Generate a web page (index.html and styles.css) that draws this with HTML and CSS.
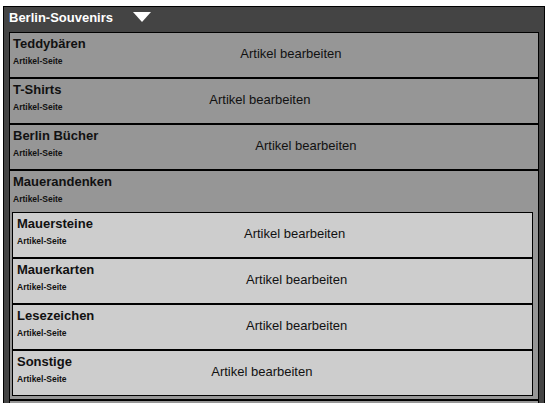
FILE: index.html
```html
<!DOCTYPE html>
<html lang="de">
<head>
  <meta charset="UTF-8">
  <meta name="viewport" content="width=device-width, initial-scale=1.0">
  <title>Berlin-Souvenirs</title>
  <link rel="stylesheet" href="styles.css">
</head>
<body>
  <div class="panel">
    <div class="panel-head">
      <span class="panel-title">Berlin-Souvenirs</span>
      <svg class="toggle" width="18" height="10" viewBox="0 0 18 10"><polygon points="0,0 18,0 9,10" fill="#fff"/></svg>
    </div>
    <div class="cat-list">
      <div class="cat">
        <table class="row"><tr>
          <td class="name"><div class="title">Teddybären</div><div class="sub">Artikel-Seite</div></td>
          <td class="action">Artikel bearbeiten</td>
        </tr></table>
      </div>
      <div class="cat">
        <table class="row"><tr>
          <td class="name"><div class="title">T-Shirts</div><div class="sub">Artikel-Seite</div></td>
          <td class="action">Artikel bearbeiten</td>
        </tr></table>
      </div>
      <div class="cat">
        <table class="row"><tr>
          <td class="name"><div class="title">Berlin Bücher</div><div class="sub">Artikel-Seite</div></td>
          <td class="action">Artikel bearbeiten</td>
        </tr></table>
      </div>
      <div class="cat group">
        <div class="group-name"><div class="title">Mauerandenken</div><div class="sub">Artikel-Seite</div></div>
        <div class="child-list">
          <div class="cat child">
            <table class="row"><tr>
              <td class="name"><div class="title">Mauersteine</div><div class="sub">Artikel-Seite</div></td>
              <td class="action">Artikel bearbeiten</td>
            </tr></table>
          </div>
          <div class="cat child">
            <table class="row"><tr>
              <td class="name"><div class="title">Mauerkarten</div><div class="sub">Artikel-Seite</div></td>
              <td class="action">Artikel bearbeiten</td>
            </tr></table>
          </div>
          <div class="cat child">
            <table class="row"><tr>
              <td class="name"><div class="title">Lesezeichen</div><div class="sub">Artikel-Seite</div></td>
              <td class="action">Artikel bearbeiten</td>
            </tr></table>
          </div>
          <div class="cat child">
            <table class="row"><tr>
              <td class="name"><div class="title">Sonstige</div><div class="sub">Artikel-Seite</div></td>
              <td class="action">Artikel bearbeiten</td>
            </tr></table>
          </div>
        </div>
      </div>
      <div class="cat empty"></div>
    </div>
  </div>
</body>
</html>
```

FILE: styles.css
```css
body {
  margin: 6px 0 0 3px;
  font-family: "Liberation Sans", Arial, sans-serif;
  color: #111;
  background: #fff;
  overflow: hidden;
}
.panel {
  width: 530px;
  background: #444;
  border: 1px solid #000;
  padding: 0 5px;
}
.panel-head {
  padding: 2px 0 6px;
  line-height: 17px;
  color: #fff;
  font-size: 13px;
  font-weight: bold;
}
.toggle {
  margin-left: 16px;
  vertical-align: 0;
}
.cat {
  background: #969696;
  border: 1px solid #000;
}
.cat.child {
  background: #cdcdcd;
}
.cat.empty {
  height: 44px;
}
.row {
  width: 100%;
  height: 44px;
  border-collapse: collapse;
  border-spacing: 0;
}
.row td {
  padding: 0;
  vertical-align: top;
}
.row .name {
  padding: 3px 3px 0;
}
.child .row .name {
  padding: 3px 4px 0;
}
.row .action {
  padding: 13px 39px 0 100px;
  font-size: 13px;
  line-height: 15px;
  white-space: nowrap;
}
.child .row .action {
  padding: 13px 4px 0 45px;
}
.title {
  font-size: 13px;
  font-weight: bold;
  line-height: 15px;
  white-space: nowrap;
}
.sub {
  margin-top: 4px;
  font-size: 8.5px;
  font-weight: bold;
  line-height: 12px;
  white-space: nowrap;
}
.group-name {
  padding: 3px 3px 0;
}
.child-list {
  margin: 7px 5px 3px 2px;
}
```
